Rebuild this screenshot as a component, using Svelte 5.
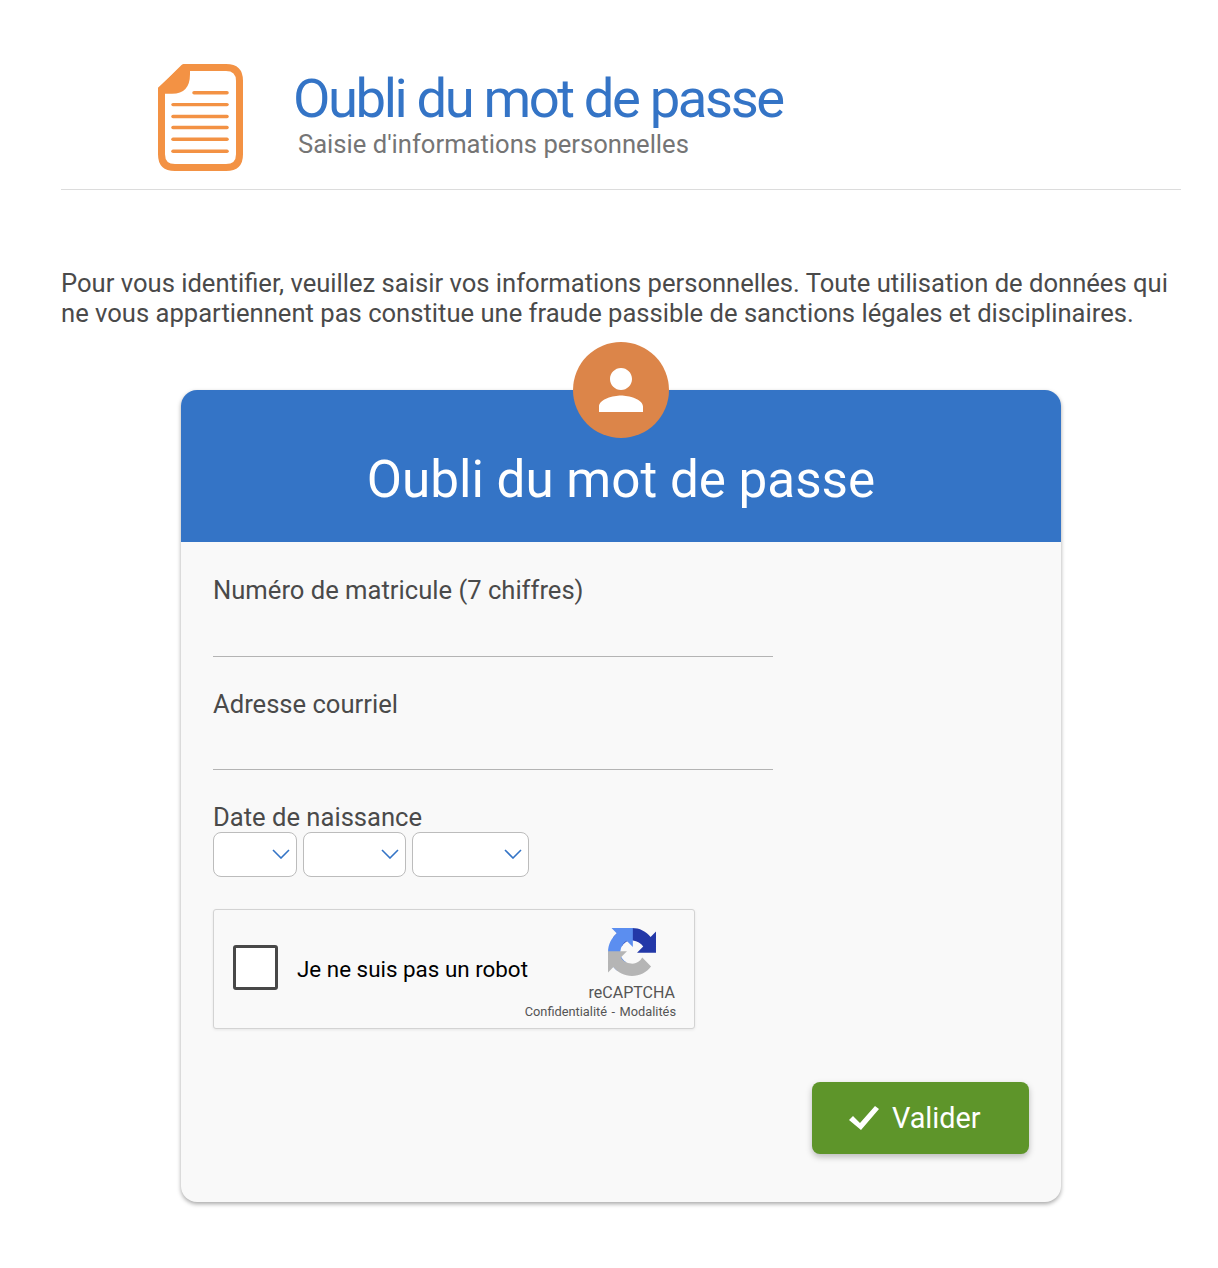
<script>
	const selects = [
		{ name: 'jour', width: 84 },
		{ name: 'mois', width: 103 },
		{ name: 'annee', width: 117 }
	];

	// recaptcha arrow, the other two are this one rotated around the centre
	const arrow = 'M64 31.955l-.033-1.37V4.687l-7.16 7.16C50.948 4.674 42.033.093 32.05.093c-10.4 0-19.622 4.96-25.458 12.64l11.736 11.86a15.55 15.55 0 0 1 4.754-5.334c2.05-1.6 4.952-2.906 8.968-2.906.485 0 .86.057 1.135.163 5.808.46 10.843 3.666 13.805 8.315l-8.307 8.307 26.295-.007';
</script>

<div class="page">
	<header class="head">
		<svg class="doc" width="85" height="107" viewBox="0 0 85 108" preserveAspectRatio="none" aria-hidden="true">
			<path d="M26 3.500 H68 Q81.500 3.500 81.500 17 V91 Q81.500 104.500 68 104.500 H17 Q3.500 104.500 3.500 91 V26 Z" fill="#fff" stroke="#f39244" stroke-width="7" stroke-linejoin="round" />
			<path d="M0 24 L26 0 H32 V10 Q32 30 14 30 H0 Z" fill="#f39244" />
			<g stroke="#f39244" stroke-width="3.500" stroke-linecap="round">
				<path d="M36 29 H69" />
				<path d="M15 41 H69" />
				<path d="M15 53 H69" />
				<path d="M15 64 H69" />
				<path d="M15 76 H69" />
				<path d="M15 88 H69" />
			</g>
		</svg>
		<div class="titles">
			<h1>Oubli du mot de passe</h1>
			<p>Saisie d'informations personnelles</p>
		</div>
	</header>

	<p class="intro">Pour vous identifier, veuillez saisir vos informations personnelles. Toute utilisation de données qui ne vous appartiennent pas constitue une fraude passible de sanctions légales et disciplinaires.</p>

	<div class="card">
		<div class="avatar">
			<svg width="66" height="66" viewBox="0 0 24 24" aria-hidden="true">
				<path fill="#fff" d="M12 12c2.200 0 4-1.800 4-4s-1.800-4-4-4-4 1.800-4 4 1.800 4 4 4zm0 2c-2.700 0-8 1.300-8 4v2h16v-2c0-2.700-5.300-4-8-4z" />
			</svg>
		</div>
		<div class="card-head">
			<h2>Oubli du mot de passe</h2>
		</div>
		<form class="card-body" onsubmit={(e) => e.preventDefault()}>
			<label class="field">
				<span>Numéro de matricule (7 chiffres)</span>
				<input type="text" />
			</label>
			<label class="field">
				<span>Adresse courriel</span>
				<input type="text" />
			</label>
			<div class="date">
				<span class="date-label">Date de naissance</span>
				<div class="selects">
					{#each selects as s}
						<div class="select" style="width: {s.width}px">
							<svg width="18" height="10" viewBox="0 0 18 10" aria-hidden="true">
								<path d="M1 1 L9 9 L17 1" fill="none" stroke="#3474c6" stroke-width="1.600" />
							</svg>
						</div>
					{/each}
				</div>
			</div>
			<div class="captcha">
				<div class="box"></div>
				<span class="robot">Je ne suis pas un robot</span>
				<div class="brand">
					<div class="mark">
						<svg width="48" height="48" viewBox="0 0 64 64" aria-hidden="true">
							<path fill="#2338a8" d={arrow} />
							<path fill="#5b8ef0" d={arrow} transform="rotate(-90 32 32)" />
							<path fill="#b5b5b5" d={arrow} transform="rotate(180 32 32)" />
						</svg>
						<span class="re">reCAPTCHA</span>
					</div>
					<span class="links">Confidentialité<i>-</i>Modalités</span>
				</div>
			</div>
			<div class="actions">
				<button type="submit">
					<svg width="32" height="26" viewBox="0 0 32 26" aria-hidden="true">
						<path d="M1 15 L5 11 L12 18 L27 1 L31 4 L13 25 Z" fill="#fff" />
					</svg>
					Valider
				</button>
			</div>
		</form>
	</div>
</div>

<style>
	:global(body) {
		margin: 0;
		background: #fff;
		font-family: Roboto, "Liberation Sans", sans-serif;
	}

	.page {
		padding: 0 37px 66px 61px;
		color: #4a4a4a;
	}

	.head {
		display: flex;
		align-items: flex-start;
		height: 189px;
		border-bottom: 1px solid #dcdcdc;
		padding-left: 97px;
	}

	.doc {
		margin-top: 64px;
		flex: none;
	}

	.titles {
		margin-left: 50px;
	}

	h1 {
		margin: 65px 0 0;
		font-size: 54.4px;
		line-height: 67px;
		font-weight: 400;
		letter-spacing: -2.4px;
		color: #3474c6;
	}

	.titles p {
		margin: -3px 0 0 5px;
		font-size: 25.6px;
		line-height: 30px;
		color: #757575;
	}

	.intro {
		margin: 78px 0 0;
		font-size: 25.6px;
		line-height: 30px;
		color: #4a4a4a;
	}

	.card {
		position: relative;
		width: 880px;
		margin: 62px 0 0 120px;
		border-radius: 16px;
		background: #f9f9f9;
		box-shadow: 0 2px 4px rgba(0, 0, 0, 0.35);
	}

	.avatar {
		position: absolute;
		top: -48px;
		left: 392px;
		width: 96px;
		height: 96px;
		border-radius: 50%;
		background: #dc8549;
		display: flex;
		align-items: center;
		justify-content: center;
	}

	.card-head {
		height: 152px;
		box-sizing: border-box;
		padding-top: 57px;
		background: #3474c6;
		border-radius: 16px 16px 0 0;
		text-align: center;
	}

	h2 {
		margin: 0;
		font-size: 51.2px;
		line-height: 66px;
		font-weight: 400;
		color: #fff;
	}

	.card-body {
		padding: 32px 32px 48px;
		display: flex;
		flex-direction: column;
	}

	.field {
		display: flex;
		flex-direction: column;
		width: 560px;
		height: 83px;
		margin-bottom: 30px;
		font-size: 25.6px;
		line-height: 32px;
	}

	.field + .field span {
		padding-top: 1px;
	}

	.field input {
		flex: 1;
		min-height: 0;
		border: 0;
		border-bottom: 1px solid #b4b4b4;
		background: transparent;
		outline: none;
	}

	.date {
		font-size: 25.6px;
		line-height: 32px;
	}

	.date-label {
		display: block;
		box-sizing: border-box;
		height: 32px;
		padding-top: 1px;
	}

	.selects {
		display: flex;
		gap: 6px;
	}

	.select {
		height: 45px;
		box-sizing: border-box;
		border: 1px solid #bcbcbc;
		border-radius: 8px;
		background: #fff;
		display: flex;
		align-items: center;
		justify-content: flex-end;
		padding: 0 6px 2px 0;
	}

	.captcha {
		position: relative;
		display: flex;
		align-items: center;
		width: 482px;
		height: 120px;
		box-sizing: border-box;
		margin-top: 32px;
		padding-left: 19px;
		border: 1px solid #d3d3d3;
		border-radius: 3px;
		background: #f9f9f9;
		box-shadow: 0 1px 3px rgba(0, 0, 0, 0.08);
	}

	.box {
		width: 45px;
		height: 45px;
		box-sizing: border-box;
		margin-top: -4px;
		border: 3px solid #484848;
		border-radius: 3px;
		background: #fff;
	}

	.robot {
		margin-left: 19px;
		font-size: 22.4px;
		color: #000;
	}

	.brand {
		position: absolute;
		top: 18px;
		right: 18px;
		display: flex;
		flex-direction: column;
		align-items: flex-end;
	}

	.mark {
		display: flex;
		flex-direction: column;
		align-items: center;
		margin-right: 1px;
	}

	.re {
		margin-top: 7px;
		font-size: 16px;
		line-height: 20px;
		color: #555;
	}

	.links {
		margin-top: 1px;
		font-size: 12.800px;
		line-height: 16px;
		color: #555;
		white-space: nowrap;
	}

	.links i {
		margin: 0 4.500px;
		font-style: normal;
	}

	.actions {
		display: flex;
		justify-content: flex-end;
		margin-top: 53px;
	}

	button {
		display: flex;
		align-items: center;
		gap: 12px;
		width: 217px;
		height: 72px;
		padding: 0 0 0 36px;
		border: 0;
		border-radius: 8px;
		background: #5e952a;
		color: #fff;
		font-family: inherit;
		font-size: 28.8px;
		box-shadow: 0 3px 6px rgba(0, 0, 0, 0.25);
	}
</style>
